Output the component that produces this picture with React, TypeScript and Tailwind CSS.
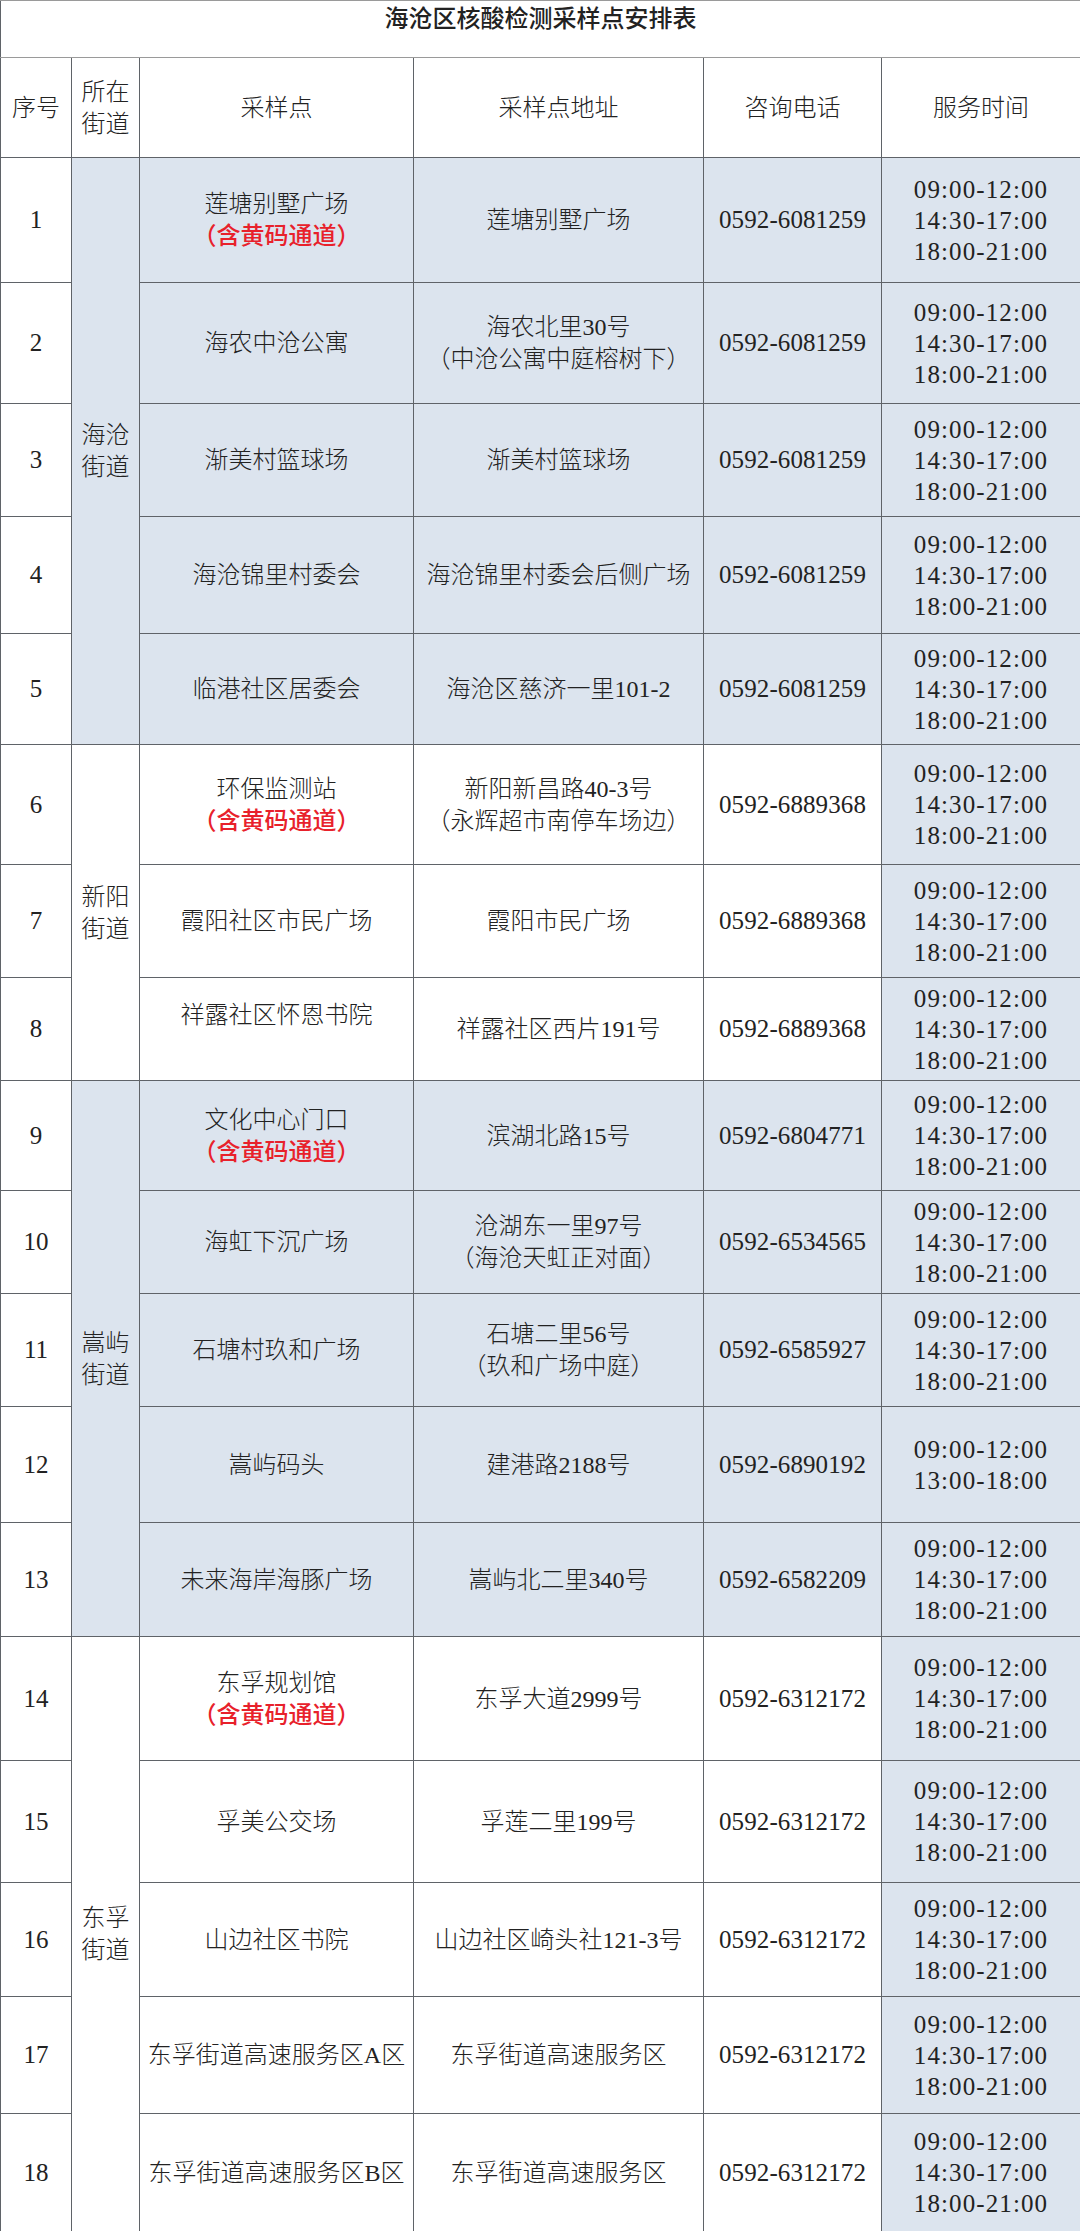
import React from "react";

type Row = {
  no: string;
  h: string;
  name: string;
  red?: boolean;
  nameClass?: string;
  addr: string[];
  phone: string;
  times: string[];
};

type Group = {
  street: string[];
  shaded: boolean;
  rows: Row[];
};

const T3 = ["09:00-12:00", "14:30-17:00", "18:00-21:00"];

const groups: Group[] = [
  {
    street: ["海沧", "街道"],
    shaded: true,
    rows: [
      { no: "1", h: "h-[125px]", name: "莲塘别墅广场", red: true, addr: ["莲塘别墅广场"], phone: "0592-6081259", times: T3 },
      { no: "2", h: "h-[121px]", name: "海农中沧公寓", addr: ["海农北里30号", "（中沧公寓中庭榕树下）"], phone: "0592-6081259", times: T3 },
      { no: "3", h: "h-[113px]", name: "渐美村篮球场", addr: ["渐美村篮球场"], phone: "0592-6081259", times: T3 },
      { no: "4", h: "h-[117px]", name: "海沧锦里村委会", addr: ["海沧锦里村委会后侧广场"], phone: "0592-6081259", times: T3 },
      { no: "5", h: "h-[111px]", name: "临港社区居委会", addr: ["海沧区慈济一里101-2"], phone: "0592-6081259", times: T3 },
    ],
  },
  {
    street: ["新阳", "街道"],
    shaded: false,
    rows: [
      { no: "6", h: "h-[120px]", name: "环保监测站", red: true, addr: ["新阳新昌路40-3号", "（永辉超市南停车场边）"], phone: "0592-6889368", times: T3 },
      { no: "7", h: "h-[113px]", name: "霞阳社区市民广场", addr: ["霞阳市民广场"], phone: "0592-6889368", times: T3 },
      { no: "8", h: "h-[103px]", name: "祥露社区怀恩书院", nameClass: "pb-[28px]", addr: ["祥露社区西片191号"], phone: "0592-6889368", times: T3 },
    ],
  },
  {
    street: ["嵩屿", "街道"],
    shaded: true,
    rows: [
      { no: "9", h: "h-[110px]", name: "文化中心门口", red: true, addr: ["滨湖北路15号"], phone: "0592-6804771", times: T3 },
      { no: "10", h: "h-[103px]", name: "海虹下沉广场", addr: ["沧湖东一里97号", "（海沧天虹正对面）"], phone: "0592-6534565", times: T3 },
      { no: "11", h: "h-[113px]", name: "石塘村玖和广场", addr: ["石塘二里56号", "（玖和广场中庭）"], phone: "0592-6585927", times: T3 },
      { no: "12", h: "h-[116px]", name: "嵩屿码头", addr: ["建港路2188号"], phone: "0592-6890192", times: ["09:00-12:00", "13:00-18:00"] },
      { no: "13", h: "h-[114px]", name: "未来海岸海豚广场", addr: ["嵩屿北二里340号"], phone: "0592-6582209", times: T3 },
    ],
  },
  {
    street: ["东孚", "街道"],
    shaded: false,
    rows: [
      { no: "14", h: "h-[124px]", name: "东孚规划馆", red: true, addr: ["东孚大道2999号"], phone: "0592-6312172", times: T3 },
      { no: "15", h: "h-[122px]", name: "孚美公交场", addr: ["孚莲二里199号"], phone: "0592-6312172", times: T3 },
      { no: "16", h: "h-[114px]", name: "山边社区书院", addr: ["山边社区崎头社121-3号"], phone: "0592-6312172", times: T3 },
      { no: "17", h: "h-[117px]", name: "东孚街道高速服务区A区", addr: ["东孚街道高速服务区"], phone: "0592-6312172", times: T3 },
      { no: "18", h: "h-[118px]", name: "东孚街道高速服务区B区", addr: ["东孚街道高速服务区"], phone: "0592-6312172", times: T3 },
    ],
  },
];

const cell = "border border-[#5f6368] text-center align-middle p-0";

export default function App() {
  return (
    <div className="w-[1080px] bg-white">
      <table className="w-[1080px] table-fixed border-collapse text-[#222] font-['Liberation_Serif','Noto_Sans_CJK_SC',serif] text-[24px] leading-[32px] font-light">
        <colgroup>
          <col className="w-[71px]" />
          <col className="w-[68px]" />
          <col className="w-[274px]" />
          <col className="w-[290px]" />
          <col className="w-[178px]" />
          <col className="w-[199px]" />
        </colgroup>
        <tbody>
          <tr className="h-[57px]">
            <td colSpan={6} className="border border-[#9a9a9a] border-l-[#5f6368] text-center align-top pt-[3px] text-[24px] leading-[30px] font-medium">
              海沧区核酸检测采样点安排表
            </td>
          </tr>
          <tr className="h-[100px]">
            <td className={cell}>序号</td>
            <td className={cell}>
              <div>所在</div>
              <div>街道</div>
            </td>
            <td className={cell}>采样点</td>
            <td className={cell}>采样点地址</td>
            <td className={cell}>咨询电话</td>
            <td className={cell}>服务时间</td>
          </tr>
          {groups.map((g) =>
            g.rows.map((r, i) => {
              const bg = g.shaded ? "bg-[#dce4ee]" : "bg-white";
              return (
                <tr key={r.no} className={r.h}>
                  <td className={`${cell} bg-white text-[25px]`}>{r.no}</td>
                  {i === 0 && (
                    <td rowSpan={g.rows.length} className={`${cell} ${bg}`}>
                      <div>{g.street[0]}</div>
                      <div>{g.street[1]}</div>
                    </td>
                  )}
                  <td className={`${cell} ${bg}`}>
                    <div className={r.nameClass}>
                      <div>{r.name}</div>
                      {r.red && <div className="text-[#e8212b] font-medium">（含黄码通道）</div>}
                    </div>
                  </td>
                  <td className={`${cell} ${bg}`}>
                    {r.addr.map((a) => (
                      <div key={a}>{a}</div>
                    ))}
                  </td>
                  <td className={`${cell} ${bg} text-[25px] tracking-[0.1px]`}>{r.phone}</td>
                  <td className={`${cell} bg-[#dce4ee] text-[25px] tracking-[1.1px] leading-[31px]`}>
                    {r.times.map((t) => (
                      <div key={t}>{t}</div>
                    ))}
                  </td>
                </tr>
              );
            })
          )}
        </tbody>
      </table>
    </div>
  );
}
